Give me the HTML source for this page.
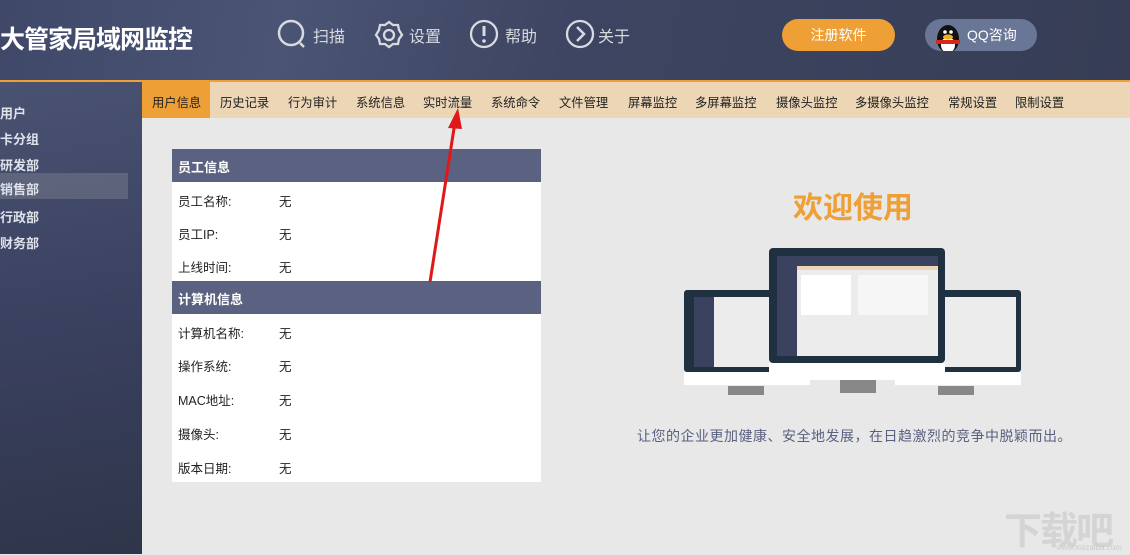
<!DOCTYPE html>
<html><head><meta charset="utf-8"><style>
*{margin:0;padding:0;box-sizing:border-box}
body{width:1130px;height:554px;overflow:hidden;font-family:"Liberation Sans","Noto Sans CJK SC",sans-serif;background:#e8e8e8;position:relative}
.hdr{position:absolute;left:0;top:0;width:1130px;height:80px;background:linear-gradient(100deg,#3f4868 0%,#4a5474 25%,#3d4562 50%,#363d55 100%)}
.line{position:absolute;left:0;top:80px;width:1130px;height:2px;background:#ee9f35}
.side{position:absolute;left:0;top:82px;width:142px;height:472px;background:linear-gradient(170deg,#4a5272 0%,#3a4160 50%,#2f3549 100%)}
.side div{position:absolute;left:0;font-size:13px;color:#dfe2ea;font-weight:bold}
.nav{position:absolute;left:142px;top:82px;width:988px;height:36px;background:#ecd6b6}
.nav span{position:absolute;top:11px;font-size:12.3px;color:#222}
.abs{position:absolute}
.t{position:absolute;left:172px;width:369px;background:#fff}
.th{position:absolute;left:172px;width:369px;height:33px;background:#5b6181;color:#fff;font-weight:bold;font-size:13px;padding:8px 0 0 6px}
.r{position:absolute;font-size:12.5px;color:#222}
.hi{font-size:16px;color:#d8dae0;top:23px}
</style></head><body>
<div class="hdr"></div>
<div class="abs" style="left:0;top:20px;font-size:25px;color:#fff;font-weight:bold;letter-spacing:-1px">大管家局域网监控</div>
<svg class="abs" style="left:277px;top:19px" width="32" height="32"><circle cx="14" cy="14" r="12" fill="none" stroke="#d8dae0" stroke-width="2.5"/><path d="M23 24l4 4" stroke="#d8dae0" stroke-width="2.5"/></svg>
<div class="abs hi" style="left:313px">扫描</div>
<svg class="abs" style="left:373px;top:19px" width="32" height="32"><path d="M16 3l4 3 5 0 1 5 3 5-3 4-1 5-5 0-4 3-4-3-5 0-1-5-3-4 3-5 1-5 5 0z" fill="none" stroke="#d8dae0" stroke-width="2.3"/><circle cx="16" cy="16" r="5" fill="none" stroke="#d8dae0" stroke-width="2.3"/></svg>
<div class="abs hi" style="left:409px">设置</div>
<svg class="abs" style="left:469px;top:19px" width="32" height="32"><circle cx="15" cy="15" r="13" fill="none" stroke="#d8dae0" stroke-width="2.3"/><path d="M15 7v10" stroke="#d8dae0" stroke-width="3"/><circle cx="15" cy="22" r="1.8" fill="#d8dae0"/></svg>
<div class="abs hi" style="left:505px">帮助</div>
<svg class="abs" style="left:565px;top:19px" width="32" height="32"><circle cx="15" cy="15" r="13" fill="none" stroke="#d8dae0" stroke-width="2.3"/><path d="M12 8l7 7-7 7" fill="none" stroke="#d8dae0" stroke-width="2.5"/></svg>
<div class="abs hi" style="left:598px">关于</div>
<div class="abs" style="left:782px;top:19px;width:113px;height:32px;border-radius:16px;background:#ee9f35;color:#fff;font-size:14px;text-align:center;line-height:32px">注册软件</div>
<div class="abs" style="left:925px;top:19px;width:112px;height:32px;border-radius:16px;background:#6a7696;color:#fff;font-size:14px;line-height:32px;padding-left:42px;overflow:hidden">QQ咨询
<svg class="abs" style="left:6px;top:4px" width="34" height="30"><ellipse cx="17" cy="16" rx="11" ry="14" fill="#111"/><ellipse cx="17" cy="22" rx="7" ry="8" fill="#fff"/><ellipse cx="17" cy="14" rx="5" ry="2.5" fill="#f2b21c"/><path d="M5 17h24v4H5z" fill="#d9261c"/><circle cx="14" cy="9" r="1.8" fill="#fff"/><circle cx="20" cy="9" r="1.8" fill="#fff"/></svg></div>
<div class="line"></div>
<div class="side">
<div style="top:21px">用户</div>
<div style="top:47px">卡分组</div>
<div style="top:73px">研发部</div>
<div style="top:91px;width:128px;height:26px;background:rgba(120,125,140,.5)"></div>
<div style="top:97px">销售部</div>
<div style="top:125px">行政部</div>
<div style="top:151px">财务部</div>
</div>
<div class="nav">
<div class="abs" style="left:0;top:0;width:68px;height:36px;background:#ee9f35"></div>
<span style="left:10px">用户信息</span><span style="left:78px">历史记录</span><span style="left:146px">行为审计</span><span style="left:214px">系统信息</span><span style="left:281px">实时流量</span><span style="left:349px">系统命令</span><span style="left:417px">文件管理</span><span style="left:486px">屏幕监控</span><span style="left:553px">多屏幕监控</span><span style="left:634px">摄像头监控</span><span style="left:713px">多摄像头监控</span><span style="left:806px">常规设置</span><span style="left:873px">限制设置</span>
</div>
<div class="t" style="top:149px;height:333px"></div>
<div class="th" style="top:149px">员工信息</div>
<div class="th" style="top:281px">计算机信息</div>
<div class="r" style="left:178px;top:191px">员工名称:</div><div class="r" style="left:279px;top:191px">无</div>
<div class="r" style="left:178px;top:224px">员工IP:</div><div class="r" style="left:279px;top:224px">无</div>
<div class="r" style="left:178px;top:257px">上线时间:</div><div class="r" style="left:279px;top:257px">无</div>
<div class="r" style="left:178px;top:323px">计算机名称:</div><div class="r" style="left:279px;top:323px">无</div>
<div class="r" style="left:178px;top:356px">操作系统:</div><div class="r" style="left:279px;top:356px">无</div>
<div class="r" style="left:178px;top:390px">MAC地址:</div><div class="r" style="left:279px;top:390px">无</div>
<div class="r" style="left:178px;top:424px">摄像头:</div><div class="r" style="left:279px;top:424px">无</div>
<div class="r" style="left:178px;top:458px">版本日期:</div><div class="r" style="left:279px;top:458px">无</div>
<div class="abs" style="left:793px;top:183px;font-size:30px;color:#ee9f35;font-weight:bold">欢迎使用</div>
<svg class="abs" style="left:680px;top:245px" width="345" height="150">
<rect x="4" y="45" width="126" height="82" rx="3" fill="#1f3040"/><rect x="14" y="52" width="110" height="70" fill="#ececec"/><rect x="14" y="52" width="20" height="70" fill="#3a4260"/><rect x="4" y="127" width="126" height="13" fill="#fff"/><rect x="48" y="141" width="36" height="10" fill="#888"/>
<rect x="215" y="45" width="126" height="82" rx="3" fill="#1f3040"/><rect x="220" y="52" width="116" height="70" fill="#ececec"/><rect x="215" y="127" width="126" height="13" fill="#fff"/><rect x="258" y="141" width="36" height="10" fill="#888"/>
<rect x="89" y="3" width="176" height="115" rx="4" fill="#1f3040"/><rect x="97" y="11" width="161" height="100" fill="#ececec"/><rect x="97" y="11" width="20" height="100" fill="#3a4260"/><rect x="97" y="11" width="161" height="10" fill="#3a4260"/><rect x="117" y="21" width="141" height="4" fill="#ecd6b6"/><rect x="121" y="30" width="50" height="40" fill="#fff"/><rect x="178" y="30" width="70" height="40" fill="#f6f6f6"/><rect x="89" y="118" width="176" height="17" fill="#fff"/><rect x="160" y="135" width="36" height="13" fill="#888"/>
</svg>
<div class="abs" style="left:637px;top:426px;font-size:14px;color:#5a6080;letter-spacing:0.5px">让您的企业更加健康、安全地发展，在日趋激烈的竞争中脱颖而出。</div>
<svg class="abs" style="left:0;top:0" width="1130" height="554"><path d="M430 282L455 122" stroke="#e01818" stroke-width="3"/><path d="M458 108l-10 20 14 1z" fill="#e01818"/></svg>
<div class="abs" style="left:1004px;top:500px;font-size:38px;color:#d4d4d4;font-weight:bold;letter-spacing:-2px">下载吧</div>
<div class="abs" style="left:1056px;top:543px;font-size:8px;color:#ccc">www.xiazaiba.com</div>
</body></html>
